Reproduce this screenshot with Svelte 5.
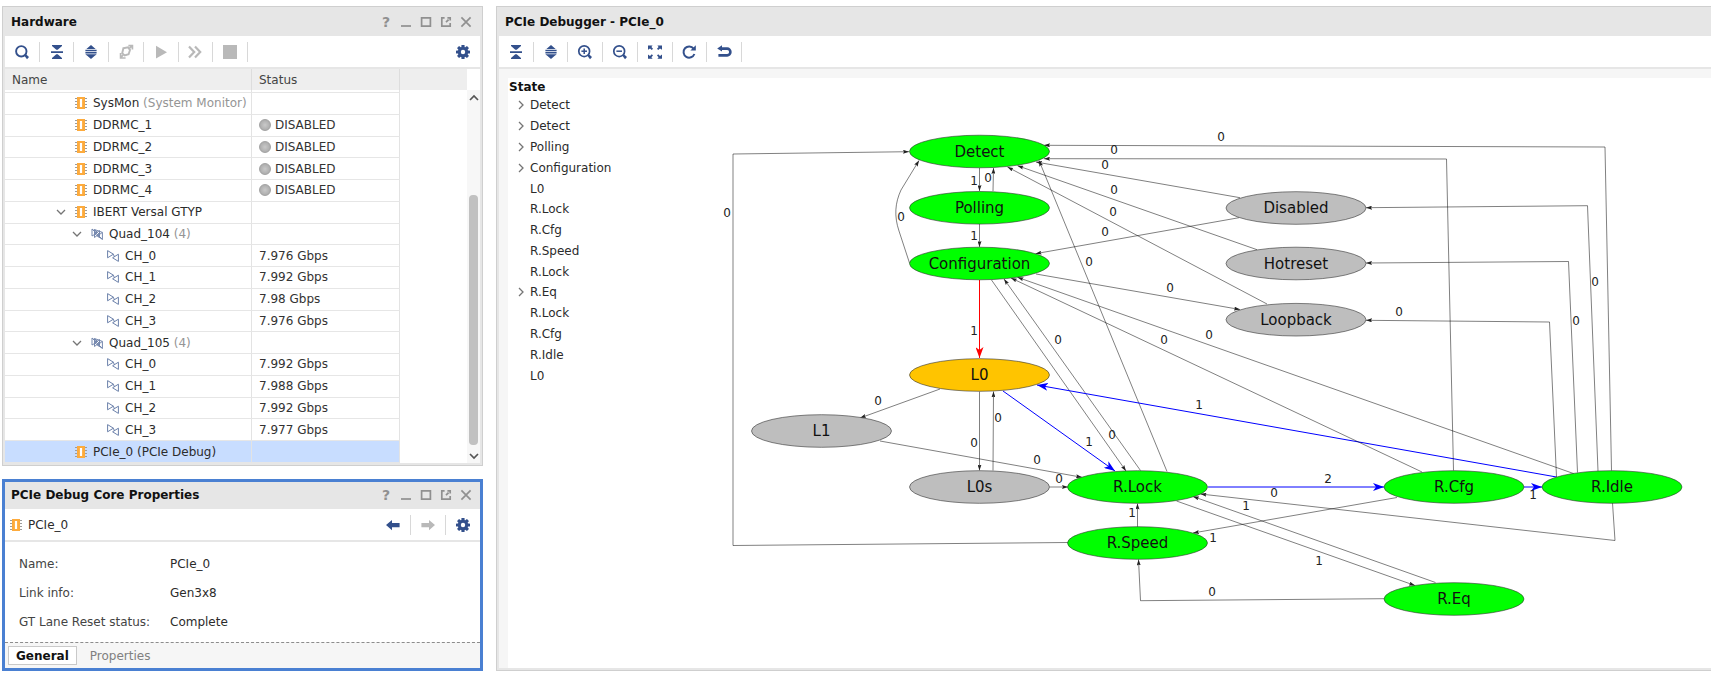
<script lang="ts">
  type Row = {
    id: string;
    name: string;
    note?: string;
    status?: string;
    level: number;
    icon: 'chip' | 'quad' | 'channel';
    open?: boolean;
    disabled?: boolean;
  };

  type Edge = { d: string; kind?: 'blue' | 'red'; label: string; x: number; y: number };

  const hardware: Row[] = [
    { id: 'sysmon', name: 'SysMon', note: '(System Monitor)', level: 0, icon: 'chip' },
    { id: 'ddr1', name: 'DDRMC_1', status: 'DISABLED', level: 0, icon: 'chip', disabled: true },
    { id: 'ddr2', name: 'DDRMC_2', status: 'DISABLED', level: 0, icon: 'chip', disabled: true },
    { id: 'ddr3', name: 'DDRMC_3', status: 'DISABLED', level: 0, icon: 'chip', disabled: true },
    { id: 'ddr4', name: 'DDRMC_4', status: 'DISABLED', level: 0, icon: 'chip', disabled: true },
    { id: 'ibert', name: 'IBERT Versal GTYP', level: 0, icon: 'chip', open: true },
    { id: 'q104', name: 'Quad_104', note: '(4)', level: 1, icon: 'quad', open: true },
    { id: 'q104c0', name: 'CH_0', status: '7.976 Gbps', level: 2, icon: 'channel' },
    { id: 'q104c1', name: 'CH_1', status: '7.992 Gbps', level: 2, icon: 'channel' },
    { id: 'q104c2', name: 'CH_2', status: '7.98 Gbps', level: 2, icon: 'channel' },
    { id: 'q104c3', name: 'CH_3', status: '7.976 Gbps', level: 2, icon: 'channel' },
    { id: 'q105', name: 'Quad_105', note: '(4)', level: 1, icon: 'quad', open: true },
    { id: 'q105c0', name: 'CH_0', status: '7.992 Gbps', level: 2, icon: 'channel' },
    { id: 'q105c1', name: 'CH_1', status: '7.988 Gbps', level: 2, icon: 'channel' },
    { id: 'q105c2', name: 'CH_2', status: '7.992 Gbps', level: 2, icon: 'channel' },
    { id: 'q105c3', name: 'CH_3', status: '7.977 Gbps', level: 2, icon: 'channel' },
    { id: 'pcie0', name: 'PCIe_0 (PCIe Debug)', level: 0, icon: 'chip' },
  ];

  const coreProps = [
    ['Name:', 'PCIe_0'],
    ['Link info:', 'Gen3x8'],
    ['GT Lane Reset status:', 'Complete'],
  ];

  const hwTools = [
    { icon: 'search', label: 'Search' },
    { icon: 'collapse', label: 'Collapse all' },
    { icon: 'expand', label: 'Expand all' },
    { icon: 'connect', label: 'Auto connect', off: true },
    { icon: 'run', label: 'Run trigger', off: true },
    { icon: 'forward', label: 'Run trigger immediate', off: true },
    { icon: 'stop', label: 'Stop trigger', off: true },
  ];

  const dbgTools = [
    { icon: 'collapse', label: 'Collapse all' },
    { icon: 'expand', label: 'Expand all' },
    { icon: 'zoomin', label: 'Zoom in' },
    { icon: 'zoomout', label: 'Zoom out' },
    { icon: 'fit', label: 'Zoom fit' },
    { icon: 'refresh', label: 'Refresh' },
    { icon: 'reset', label: 'Reset' },
  ];

  const states = [
    { name: 'Detect', children: true },
    { name: 'Detect', children: true },
    { name: 'Polling', children: true },
    { name: 'Configuration', children: true },
    { name: 'L0' },
    { name: 'R.Lock' },
    { name: 'R.Cfg' },
    { name: 'R.Speed' },
    { name: 'R.Lock' },
    { name: 'R.Eq', children: true },
    { name: 'R.Lock' },
    { name: 'R.Cfg' },
    { name: 'R.Idle' },
    { name: 'L0' },
  ];

  const nodes = [
    { name: 'Detect', x: 979.5, y: 151.5, kind: 'visited' },
    { name: 'Polling', x: 979.5, y: 207.8, kind: 'visited' },
    { name: 'Configuration', x: 979.5, y: 263.5, kind: 'visited' },
    { name: 'L0', x: 979.5, y: 375, kind: 'current' },
    { name: 'L1', x: 821.5, y: 431, kind: 'idle' },
    { name: 'L0s', x: 979.5, y: 487, kind: 'idle' },
    { name: 'R.Lock', x: 1137.5, y: 487, kind: 'visited' },
    { name: 'R.Speed', x: 1137.5, y: 543, kind: 'visited' },
    { name: 'R.Cfg', x: 1454, y: 487, kind: 'visited' },
    { name: 'R.Idle', x: 1612, y: 487, kind: 'visited' },
    { name: 'R.Eq', x: 1454, y: 599, kind: 'visited' },
    { name: 'Disabled', x: 1296, y: 208, kind: 'idle' },
    { name: 'Hotreset', x: 1296, y: 263.5, kind: 'idle' },
    { name: 'Loopback', x: 1296, y: 319.7, kind: 'idle' },
  ];

  const edges: Edge[] = [
    { d: 'M1068 542.5 L733 545.5 V154 L909 151.7', label: '0', x: 727, y: 213 },
    { d: 'M979.5 168 V191', label: '1', x: 974, y: 181 },
    { d: 'M993 191 L993.5 168', label: '0', x: 988, y: 178 },
    { d: 'M979.5 224 V247', label: '1', x: 974, y: 236 },
    { d: 'M909.5 263 L899 231 C894 216 895 203 901 190 L919 160.5', label: '0', x: 901, y: 217 },
    { d: 'M979.5 280 V358', kind: 'red', label: '1', x: 974, y: 331 },
    { d: 'M940 389 L860 418', label: '0', x: 878, y: 401 },
    { d: 'M979.5 391.5 V470.5', label: '0', x: 974, y: 443 },
    { d: 'M993 470.5 L993.5 391.5', label: '0', x: 998, y: 418 },
    { d: 'M1003 391 L1115 471', kind: 'blue', label: '1', x: 1089, y: 442 },
    { d: 'M880 441 L1082 477.3', label: '0', x: 1037, y: 460 },
    { d: 'M1049.5 487 H1068', label: '0', x: 1059, y: 479 },
    { d: 'M1137.5 527 V503.5', label: '1', x: 1132, y: 513 },
    { d: 'M991.5 280 L1126 471', label: '0', x: 1112, y: 435 },
    { d: 'M1140.5 470.5 L1004 279', label: '0', x: 1058, y: 340 },
    { d: 'M1167 471.5 L1039 160.5', label: '0', x: 1089, y: 262 },
    { d: 'M1556.5 477 L1037 385', kind: 'blue', label: '1', x: 1199, y: 405 },
    { d: 'M1208 487 H1384', kind: 'blue', label: '2', x: 1328, y: 479 },
    { d: 'M1524 487 H1542', kind: 'blue', label: '1', x: 1533, y: 495 },
    { d: 'M1612.5 503 L1615 540.5 L1200.5 494', label: '0', x: 1274, y: 493 },
    { d: 'M1397 497.5 L1193 533', label: '1', x: 1213, y: 538 },
    { d: 'M1176.5 501 L1415 585.5', label: '1', x: 1319, y: 561 },
    { d: 'M1435.5 582.5 L1193 496.5', label: '1', x: 1246, y: 506 },
    { d: 'M1384 598.7 L1140.5 600.7 L1138.5 559.5', label: '0', x: 1212, y: 592 },
    { d: 'M1611.5 470.5 L1605 147 L1044 145.3', label: '0', x: 1221, y: 137 },
    { d: 'M1453.5 470.5 L1446.5 159 L1044 158.7', label: '0', x: 1114, y: 150 },
    { d: 'M1240 197.7 L1036 162', label: '0', x: 1105, y: 165 },
    { d: 'M1257 249.7 L1017.5 165.7', label: '0', x: 1114, y: 190 },
    { d: 'M1267 304 L1007.5 167', label: '0', x: 1113, y: 212 },
    { d: 'M1239 217.7 L1035.5 253.7', label: '0', x: 1105, y: 232 },
    { d: 'M1036 274 L1240 309.5', label: '0', x: 1170, y: 288 },
    { d: 'M1574 473.7 L1017.5 277.3', label: '0', x: 1209, y: 335 },
    { d: 'M1422 472 L1011 278', label: '0', x: 1164, y: 340 },
    { d: 'M1598 471 L1587.5 205.7 L1366 207.7', label: '0', x: 1595, y: 282 },
    { d: 'M1577.5 472.5 L1568.5 261.5 L1366 263', label: '0', x: 1576, y: 321 },
    { d: 'M1556.5 477 L1549.5 322 L1366 320.3', label: '0', x: 1399, y: 312 },
  ];

  let selected = $state('pcie0');
  let propTab = $state<'general' | 'properties'>('general');
</script>

{#snippet icon(name: string)}
  <svg class="icon" viewBox="0 0 16 16" width="16" height="16" aria-hidden="true">
    {#if name === 'search'}
      <circle cx="7.3" cy="7.3" r="5.2" fill="none" stroke="currentColor" stroke-width="1.9" />
      <path d="M10.2 11.5 12 10.2 15 13 13 15.2z" fill="currentColor" />
    {:else if name === 'zoomin' || name === 'zoomout'}
      <circle cx="7.2" cy="7.2" r="5.4" fill="none" stroke="currentColor" stroke-width="1.7" />
      <path d="M4.4 7.2h5.6" stroke="currentColor" stroke-width="1.5" />
      {#if name === 'zoomin'}<path d="M7.2 4.4v5.6" stroke="currentColor" stroke-width="1.5" />{/if}
      <path d="M10.2 11.5 12 10.2 15 13 13 15.2z" fill="currentColor" />
    {:else if name === 'collapse'}
      <path d="M3 1h10v1L8.7 5.8H7.3L3 2zM2 7.2h12v1.8H2zM7.3 10.2h1.4L13 14v1H3v-1z" fill="currentColor" />
    {:else if name === 'expand'}
      <path d="M8 1 12.6 5H3.4zM2.4 5.7h11.2v1.6H2.4zM2.4 8h11.2v1.5H2.4zM2.4 10.2h11.2l-1 1H3.4zM3.4 11h9.2L8 15z" fill="currentColor" />
    {:else if name === 'connect'}
      <path d="M5.4 4.2 10 3.4 12 6 10.6 10.2 6.6 11.4 4.2 9.2z" fill="none" stroke="currentColor" stroke-width="1.9" />
      <path d="M10.4 1.6h4v4M14 2 11.4 4.4M2.6 9v5h5M2.6 14 5 11" fill="none" stroke="currentColor" stroke-width="1.7" />
    {:else if name === 'run'}
      <path d="M3 1.8 14 8.2 3 14.4z" fill="currentColor" />
    {:else if name === 'forward'}
      <path d="M2 2.6 7.2 8 2 13.4M8 2.6 13.2 8 8 13.4" fill="none" stroke="currentColor" stroke-width="2.2" />
    {:else if name === 'stop'}
      <path d="M1 1h14v14H1z" fill="currentColor" />
    {:else if name === 'fit'}
      <path d="M1 1.5h4.6L4.4 3 6 4.8 4.8 6 3 4.4 1 5.8zM15 1.5h-4.6L11.6 3 10 4.8 11.2 6 13 4.4 15 5.8zM1 14.8h4.6l-1.2-1.5L6 11.5l-1.2-1.2L3 12 1 10.4zM15 14.8h-4.6l1.2-1.5-1.6-1.8 1.2-1.2L13 12l2-1.6z" fill="currentColor" />
    {:else if name === 'refresh'}
      <path d="M12.6 4.6A5.6 5.6 0 1 0 13.4 10" fill="none" stroke="currentColor" stroke-width="2" />
      <path d="M14.8 1.2v5.2H9.4z" fill="currentColor" />
    {:else if name === 'reset'}
      <path d="M5 4.6h6.2a3.1 3.3 0 0 1 0 6.8H2.4" fill="none" stroke="currentColor" stroke-width="2.6" />
      <path d="M6 1.2v6.4L1.2 4.6z" fill="currentColor" />
    {:else if name === 'gear'}
      <g fill="currentColor">
        {#each [0, 45, 90, 135] as a (a)}
          <rect x="6.4" y="1" width="3.2" height="14" rx="0.6" transform="rotate({a} 8 8)" />
        {/each}
        <circle cx="8" cy="8" r="5.2" />
      </g>
      <circle cx="8" cy="8" r="2.2" fill="#fff" />
    {:else if name === 'back'}
      <path d="M1 8 7 3v3h7.6v4.2H7v3z" fill="currentColor" />
    {:else if name === 'next'}
      <path d="M15 8 9 3v3H1.4v4.2H9v3z" fill="currentColor" />
    {/if}
  </svg>
{/snippet}

{#snippet glyph(name: string)}
  <svg class="glyph" viewBox="0 0 12 12" width="12" height="12" aria-hidden="true">
    {#if name === 'chip'}
      <path d="M0 1.5h12M0 4.5h12M0 7.5h12M0 10.5h12" stroke="#9c9c9c" stroke-width="1" />
      <rect x="2" y="0" width="8" height="12" fill="#fdab3d" />
      <rect x="4.9" y="2" width="2.2" height="8" fill="#fff" />
    {:else if name === 'quad'}
      <path d="M1 1v7L6 5zM3.5 1.5v8L8 6zM8.5 2.5v7L4 6zM11.4 4.4v7L6.4 8zM1 1l10.4 10.4M3.5 1.5l7.9 2.9" fill="none" stroke="#7588ae" stroke-width="1" />
    {:else}
      <path d="M.6 .6v7.2L6.4 4.2zM11.4 4.2v7.2L5.6 7.8zM6.4 4.2l1 2.6" fill="none" stroke="#6b80aa" stroke-width="1" />
    {/if}
  </svg>
{/snippet}

{#snippet winControls()}
  <div class="win-controls">
    <button aria-label="Help">?</button>
    <button aria-label="Minimize"><svg viewBox="0 0 12 12" width="12" height="12"><path d="M1 10h10" /></svg></button>
    <button aria-label="Maximize"><svg viewBox="0 0 12 12" width="12" height="12"><path d="M1.6 1.8h8.8v8.4H1.6z" /></svg></button>
    <button aria-label="Float"><svg viewBox="0 0 12 12" width="12" height="12"><path d="M4.6 1.8H1.8v8.4h8.4V7M6 6.2 8.6 3.6M7.4 1.8h2.8v2.8" /></svg></button>
    <button aria-label="Close"><svg viewBox="0 0 12 12" width="12" height="12"><path d="M1.4 1.4l9.2 9.2M10.6 1.4 1.4 10.6" /></svg></button>
  </div>
{/snippet}

{#snippet toolbar(tools: { icon: string; label: string; off?: boolean }[])}
  <div class="tools">
    {#each tools as t (t.icon)}
      <button class="tool" aria-label={t.label} disabled={t.off}>{@render icon(t.icon)}</button>
    {/each}
  </div>
{/snippet}

<div class="workspace">
  <div class="side">
    <section class="panel hardware">
      <header class="title-bar">
        <h2>Hardware</h2>
        {@render winControls()}
      </header>
      <div class="toolbar">
        {@render toolbar(hwTools)}
        <button class="settings" aria-label="Settings">{@render icon('gear')}</button>
      </div>
      <div class="tree">
        <table>
          <colgroup>
            <col class="col-name" />
            <col class="col-status" />
            <col />
          </colgroup>
          <thead>
            <tr><th>Name</th><th>Status</th><th></th></tr>
          </thead>
          <tbody>
            <tr class="peek"><td></td><td></td><td class="rest"></td></tr>
            {#each hardware as row (row.id)}
              <tr class:selected={selected === row.id} onclick={() => selected = row.id}>
                <td>
                  <div class="name" style="padding-left: {48 + row.level * 16}px">
                    <span class="slot">
                      {#if row.open}
                        <button class="toggle" aria-label="Collapse {row.name}">
                          <svg viewBox="0 0 10 10" width="10" height="10"><path d="M1 3l4 4 4-4" /></svg>
                        </button>
                      {/if}
                    </span>
                    <span class="slot">{@render glyph(row.icon)}</span>
                    <span>{row.name}{#if row.note}<span class="note">&nbsp;{row.note}</span>{/if}</span>
                  </div>
                </td>
                <td>
                  <div class="status">
                    {#if row.disabled}<span class="led"></span>{/if}{row.status ?? ''}
                  </div>
                </td>
                <td class="rest"></td>
              </tr>
            {/each}
          </tbody>
        </table>
        <div class="scrollbar">
          <button aria-label="Scroll up"><svg viewBox="0 0 10 10" width="10" height="10"><path d="M1 7l4-4 4 4" /></svg></button>
          <div class="track"><div class="thumb"></div></div>
          <button aria-label="Scroll down"><svg viewBox="0 0 10 10" width="10" height="10"><path d="M1 3l4 4 4-4" /></svg></button>
        </div>
      </div>
    </section>

    <section class="panel active">
      <header class="title-bar">
        <h2>PCIe Debug Core Properties</h2>
        {@render winControls()}
      </header>
      <div class="toolbar">
        <div class="subject">{@render glyph('chip')}PCIe_0</div>
        <button class="tool nav" aria-label="Previous">{@render icon('back')}</button>
        <button class="tool nav" aria-label="Next" disabled>{@render icon('next')}</button>
        <button class="settings" aria-label="Settings">{@render icon('gear')}</button>
      </div>
      <dl>
        {#each coreProps as [key, value] (key)}
          <dt>{key}</dt>
          <dd>{value}</dd>
        {/each}
      </dl>
      <div class="tabs">
        <button class:active={propTab === 'general'} onclick={() => propTab = 'general'}>General</button>
        <button class:active={propTab === 'properties'} onclick={() => propTab = 'properties'}>Properties</button>
      </div>
    </section>
  </div>

  <section class="panel debugger">
    <header class="title-bar"><h2>PCIe Debugger - PCIe_0</h2></header>
    <div class="toolbar">{@render toolbar(dbgTools)}</div>
    <div class="canvas">
      <div class="states">
        <h3>State</h3>
        <ul>
          {#each states as s, i (i)}
            <li>
              <span class="slot">
                {#if s.children}
                  <button class="toggle" aria-label="Expand {s.name}">
                    <svg viewBox="0 0 10 10" width="10" height="10"><path d="M3 1l4 4-4 4" /></svg>
                  </button>
                {/if}
              </span>
              {s.name}
            </li>
          {/each}
        </ul>
      </div>
      <svg class="graph" viewBox="708 78 1003 590" preserveAspectRatio="xMinYMin meet" role="img" aria-label="LTSSM state diagram">
        <defs>
          <marker id="arrow" viewBox="0 0 6 4" refX="6" refY="2" markerWidth="6" markerHeight="4" markerUnits="userSpaceOnUse" orient="auto">
            <path d="M0 0 6 2 0 4 1 2z" fill="#222" />
          </marker>
          {#each ['red', 'blue'] as c (c)}
            <marker id="arrow-{c}" viewBox="0 0 11 8" refX="11" refY="4" markerWidth="11" markerHeight="8" markerUnits="userSpaceOnUse" orient="auto">
              <path d="M0 0 11 4 0 8 3 4z" fill={c} />
            </marker>
          {/each}
        </defs>
        {#each edges as e (e.d)}
          <path class="edge {e.kind ?? ''}" d={e.d} marker-end={e.kind ? `url(#arrow-${e.kind})` : 'url(#arrow)'} />
        {/each}
        {#each nodes as n (n.name)}
          <ellipse class={n.kind} cx={n.x} cy={n.y} rx="70" ry="16.3" />
          <text class="node-text" x={n.x} y={n.y + 5}>{n.name}</text>
        {/each}
        {#each edges as e (e.d)}
          <text class="edge-text" x={e.x} y={e.y + 4}>{e.label}</text>
        {/each}
      </svg>
    </div>
  </section>
</div>

<style>
  :global(body) { background: #fff; }
  .workspace {
    display: grid; grid-template-columns: 481px minmax(0, 1fr); gap: 13px;
    box-sizing: border-box; min-height: 100vh; padding: 6px 0 4px 2px;
    font: 12px/14px "DejaVu Sans", sans-serif; color: #2b2b2b;
  }
  button {
    font: inherit; color: inherit; background: none; border: 0; padding: 0; margin: 0; cursor: pointer;
    display: flex; align-items: center; justify-content: center;
  }
  button:disabled { cursor: default; }
  .side { display: flex; flex-direction: column; gap: 13px; min-width: 0; }
  .panel {
    display: flex; flex-direction: column; background: #fff; min-width: 0;
    border: 1px solid #cfcfcf; box-shadow: inset 0 0 0 2px #e6e6e6; padding: 2px;
  }
  .hardware { flex: 1; }
  .active.panel { border: 3px solid #4a80d2; padding: 0; box-shadow: none; }
  .debugger {
    border-right: 0; padding-right: 0;
    box-shadow: inset 2px 2px 0 #e6e6e6, inset 0 -2px 0 #e6e6e6;
  }

  .title-bar {
    display: flex; align-items: center; justify-content: space-between; flex-shrink: 0;
    box-sizing: border-box; height: 27px; padding: 0 4px 1px 6px; background: #e6e6e6;
  }
  h2 { margin: 0; font-size: 12px; line-height: 14px; color: #111; }
  .win-controls { display: flex; color: #909090; }
  .win-controls button { width: 20px; height: 20px; font-weight: bold; font-size: 14px; }
  .win-controls svg { fill: none; stroke: currentColor; stroke-width: 1.7; }

  .toolbar {
    display: flex; align-items: center; flex-shrink: 0;
    box-sizing: border-box; height: 33px; border-bottom: 2px solid #e6e6e6; color: #33508c;
  }
  .tools { display: flex; width: 243px; }
  .tool { flex: 1; height: 20px; border-right: 1px solid #d8d8d8; }
  .tool:disabled { color: #b9b9b9; }
  .nav { flex: 0 0 35px; }
  .settings { width: 34px; height: 20px; margin-left: auto; }
  .nav ~ .settings { margin-left: 0; }
  .subject { display: flex; align-items: center; gap: 6px; flex: 1; padding-left: 5px; color: #2b2b2b; }
  .icon, .glyph { display: block; flex-shrink: 0; }

  .tree { display: flex; flex: 1; }
  table { flex: 1; table-layout: fixed; border-collapse: separate; border-spacing: 0; width: 462px; }
  .col-name { width: 247px; }
  .col-status { width: 148px; }
  th {
    height: 21px; box-sizing: border-box; padding: 0 7px; text-align: left; font-weight: normal;
    background: #eee; border-right: 1px solid #ddd; color: #444;
  }
  th:last-child { border-right: 0; }
  td { padding: 0; border-right: 1px solid #e3e3e3; border-bottom: 1px solid #e6e6e6; }
  .peek td { height: 2px; }
  .peek td.rest { height: 3px; }
  .name { display: flex; align-items: center; gap: 4px; white-space: nowrap; }
  .note { color: #959595; }
  .slot { display: flex; justify-content: center; width: 16px; flex-shrink: 0; }
  .toggle svg, .scrollbar svg { fill: none; stroke: #757575; stroke-width: 1.3; }
  .status { display: flex; align-items: center; gap: 4px; padding-left: 7px; color: #333; }
  .led {
    width: 10px; height: 10px; border: 1px solid #a2a2a2; border-radius: 50%;
    background: radial-gradient(#c9c9c9, #a2a2a2);
  }
  .selected td { background: #c8ddff; }
  tbody td.rest { border: 0; background: #fff; }
  .scrollbar {
    display: flex; flex-direction: column; width: 13px; margin-top: 21px;
    background: #f7f7f7;
  }
  .scrollbar button { height: 15px; }
  .scrollbar svg { stroke: #555; stroke-width: 1.7; }
  .track { display: flex; flex-direction: column; flex: 1; padding: 0 2px; }
  .track::before { content: ''; flex: 90; }
  .track::after { content: ''; flex: 3; }
  .thumb { flex: 251; background: #c1c1c1; border-radius: 4px; }

  dl {
    display: grid; grid-template-columns: 151px 1fr; grid-auto-rows: 29px; align-items: center;
    margin: 0; padding: 7px 14px 6px;
  }
  dt { color: #444; }
  dd { margin: 0; }
  .tabs {
    display: flex; align-items: center; gap: 6px; box-sizing: border-box; height: 26px; padding: 0 3px;
    background: #f6f6f6; border-top: 1px dashed #8c8c8c;
  }
  .tabs button { padding: 0 7px; height: 19px; box-sizing: border-box; color: #808080; }
  .tabs button.active { font-weight: bold; color: #111; background: #fff; border: 1px solid #c9c9c9; }

  .canvas { display: flex; flex: 1; border: 9px solid #f6f6f6; border-width: 9px 0 0 9px; }
  .states { width: 200px; flex-shrink: 0; }
  h3 { margin: 0; padding: 2px 1px 1px; font-size: 12px; line-height: 14px; color: #111; }
  ul { display: grid; grid-auto-rows: 1fr; height: 291px; margin: 0; padding: 0 0 0 5px; list-style: none; }
  li { display: flex; align-items: center; gap: 1px; }
  .graph { flex: 1; min-width: 0; display: block; align-self: flex-start; }

  .edge { fill: none; stroke: #000; stroke-width: 0.5; }
  .edge.red { stroke: #f00; stroke-width: 1; }
  .edge.blue { stroke: #00f; stroke-width: 1; }
  ellipse { stroke: #333; stroke-width: 0.6; }
  .visited { fill: #0f0; }
  .current { fill: #ffc400; }
  .idle { fill: #bebebe; }
  .node-text { font-size: 15px; text-anchor: middle; fill: #111; }
  .edge-text { font-size: 12px; text-anchor: middle; fill: #222; }
</style>
